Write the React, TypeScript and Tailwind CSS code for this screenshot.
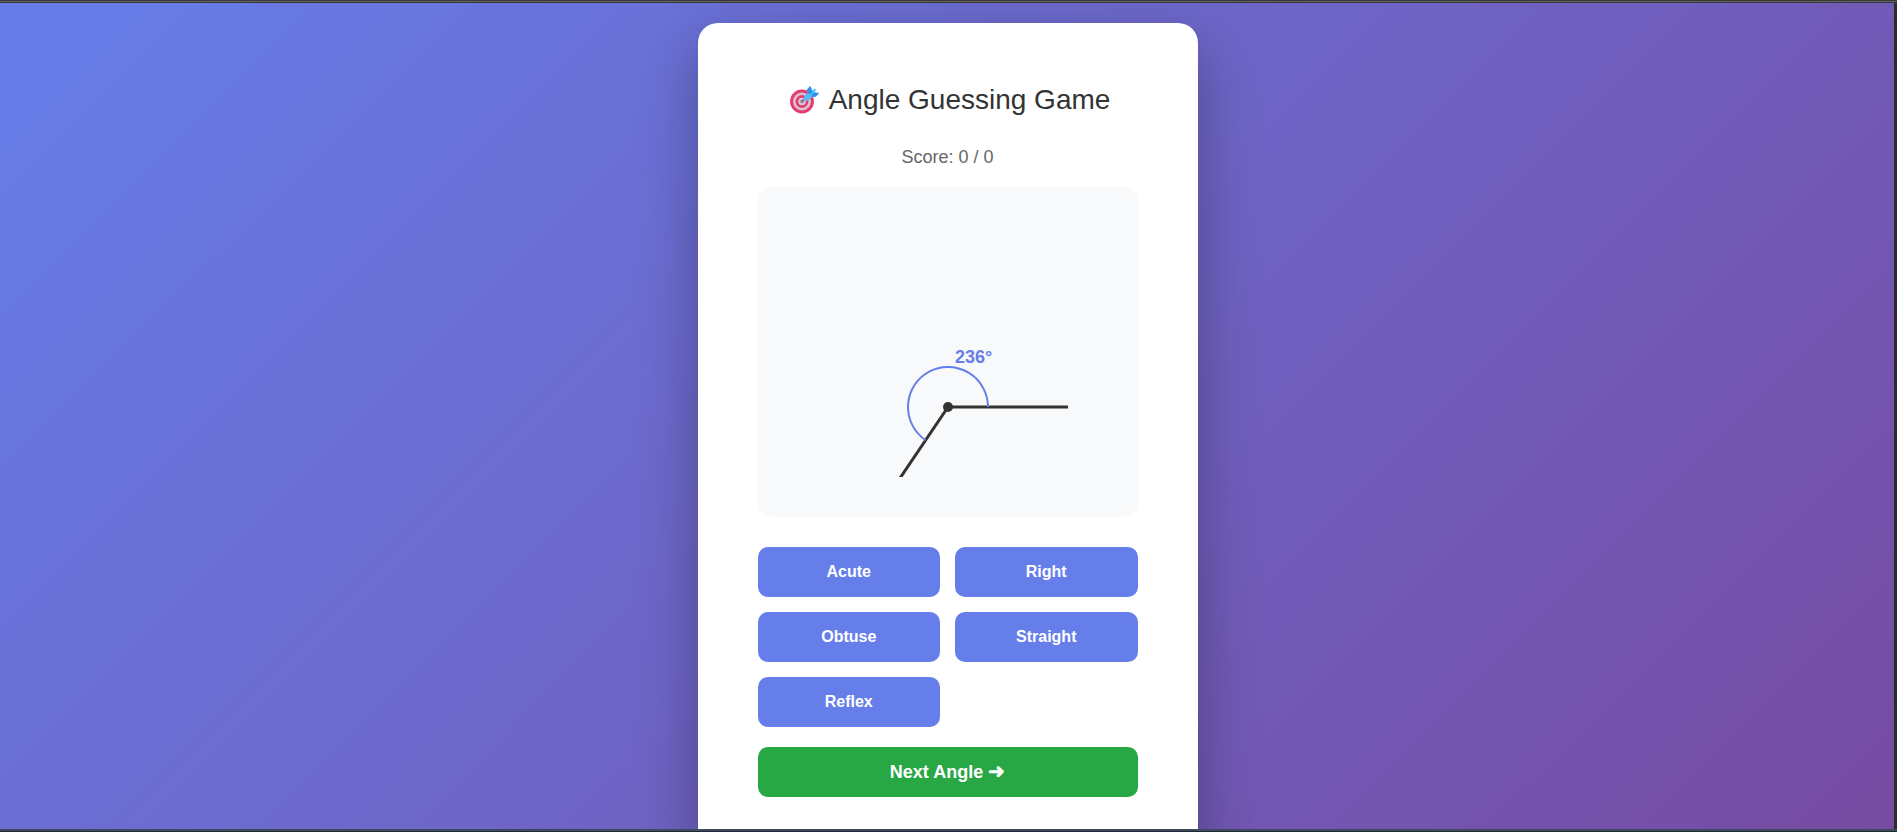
import { useState } from "react";

const CENTER = { x: 150, y: 180 };
const RAY = 120;
const ARC = 40;

const CHOICES = ["Acute", "Right", "Obtuse", "Straight", "Reflex"];

function classify(angle: number) {
  if (angle < 90) return "Acute";
  if (angle === 90) return "Right";
  if (angle < 180) return "Obtuse";
  if (angle === 180) return "Straight";
  return "Reflex";
}

function pointAt(angle: number, radius: number) {
  const rad = (angle * Math.PI) / 180;
  return {
    x: CENTER.x + radius * Math.cos(rad),
    y: CENTER.y - radius * Math.sin(rad),
  };
}

function TargetIcon() {
  return (
    <svg className="h-8 w-9" viewBox="0 0 36 32" aria-hidden="true">
      <circle cx="17" cy="17.500" r="11.900" fill="#e63c6c" />
      <circle cx="17" cy="17.500" r="9" fill="#d8c4da" />
      <circle cx="17" cy="17.500" r="6.400" fill="#e63c6c" />
      <circle cx="17" cy="17.500" r="3.800" fill="#d8c4da" />
      <circle cx="17" cy="17.500" r="1.800" fill="#948a9c" />
      <path d="M17 17.500 21 13.500" stroke="#6b6475" strokeWidth="1.300" />
      <path
        d="M19 12.500 22.500 9 22 5.500 25.200 2 27.500 6.500 29.800 4.500 31 6 29.500 8.500 34 9 31 12.500 27 13 23.500 16.500Q20.500 17.500 19 15.500Z"
        fill="#55bcf6"
      />
      <path d="M22 5.500 25.200 2 27.300 7.500 26 10.500 22.800 9ZM27 10.500 29.500 8.500 34 9 31 12.500 27 13Z" fill="#2f90ea" />
    </svg>
  );
}

function AngleFigure({ angle }: { angle: number }) {
  const ray = pointAt(angle, RAY);
  const arc = pointAt(angle, ARC);
  return (
    <svg width="300" height="250" viewBox="0 0 300 250" role="img" aria-label="Angle">
      <line x1={CENTER.x} y1={CENTER.y} x2={CENTER.x + RAY} y2={CENTER.y} stroke="#333" strokeWidth="3" />
      <line x1={CENTER.x} y1={CENTER.y} x2={ray.x} y2={ray.y} stroke="#333" strokeWidth="3" />
      <path
        d={`M ${CENTER.x + ARC} ${CENTER.y} A ${ARC} ${ARC} 0 ${angle > 180 ? 1 : 0} 0 ${arc.x} ${arc.y}`}
        fill="none"
        stroke="#667eea"
        strokeWidth="2"
      />
      <circle cx={CENTER.x} cy={CENTER.y} r="5" fill="#333" />
      <text x="157" y="136" className="fill-[#667eea] text-[18px] font-bold">
        {angle}°
      </text>
    </svg>
  );
}

export default function App() {
  const [angle, setAngle] = useState(236);
  const [score, setScore] = useState(0);
  const [total, setTotal] = useState(0);

  const guess = (choice: string) => {
    setTotal(total + 1);
    if (choice === classify(angle)) setScore(score + 1);
  };

  return (
    <div className="flex h-screen flex-col font-['Liberation_Sans',Arial,sans-serif]">
      <div className="h-[3px] shrink-0 border-y border-[#383838] bg-[#636363]" />
      <div className="flex min-h-0 grow">
        <main className="flex grow items-start justify-center overflow-hidden bg-linear-[135deg,#667eea_0%,#764ba2_100%] pt-5 pl-px">
          <section className="w-full max-w-[500px] rounded-[20px] bg-white p-[60px] text-center shadow-[0_20px_60px_rgba(0,0,0,0.3)]">
            <h1 className="flex items-center justify-center gap-2 text-[28px] leading-[33px] text-[#333]">
              <TargetIcon />
              Angle Guessing Game
            </h1>
            <p className="mt-[30px] text-[18px] leading-[23px] text-[#666]">
              Score: {score} / {total}
            </p>
            <div className="mt-[18px] flex justify-center rounded-[15px] bg-[#f8f9fa] py-10">
              <AngleFigure angle={angle} />
            </div>
            <div className="mt-[30px] grid grid-cols-2 gap-[15px]">
              {CHOICES.map((choice) => (
                <button
                  key={choice}
                  type="button"
                  onClick={() => guess(choice)}
                  className="h-[50px] cursor-pointer rounded-[10px] bg-[#667eea] text-[16px] font-bold text-white"
                >
                  {choice}
                </button>
              ))}
            </div>
            <button
              type="button"
              onClick={() => setAngle(1 + Math.floor(Math.random() * 359))}
              className="mt-5 h-[50px] w-full cursor-pointer rounded-[10px] bg-[#28a745] text-[18px] font-bold text-white"
            >
              Next Angle <span className="text-[20px] leading-none">➜</span>
            </button>
          </section>
        </main>
        <div className="w-[3px] shrink-0 bg-[#2b2b2b]" />
      </div>
      <div className="h-[3px] shrink-0 border-b border-[#1e2a3a] bg-[#3f4b5a]" />
    </div>
  );
}
